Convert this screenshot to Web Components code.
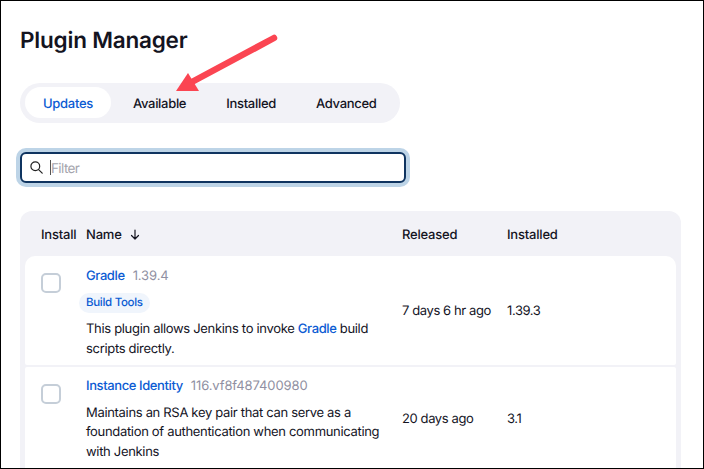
<!DOCTYPE html>
<html>
<head>
<meta charset="utf-8">
<style>
html, body { margin: 0; height: 100%; background: #fff; }
body { font-family: Inter, "Liberation Sans", sans-serif; color: #14141f; text-rendering: geometricPrecision; }
</style>
</head>
<body>
<plugin-page>
  <tab-bar>
    <tab-item active>Updates</tab-item>
    <tab-item>Available</tab-item>
    <tab-item>Installed</tab-item>
    <tab-item>Advanced</tab-item>
  </tab-bar>
  <filter-box></filter-box>
  <plugin-table>
    <plugin-row name="Gradle" version="1.39.4" released="7 days 6 hr ago" installed="1.39.3" tag="Build Tools">
      This plugin allows Jenkins to invoke <a href="#">Gradle</a> build scripts directly.
    </plugin-row>
    <plugin-row name="Instance Identity" version="116.vf8f487400980" released="20 days ago" installed="3.1">
      Maintains an RSA key pair that can serve as a foundation of authentication when communicating with Jenkins
    </plugin-row>
  </plugin-table>
</plugin-page>
<script>
class PluginPage extends HTMLElement {
  constructor() {
    super()
    this.attachShadow({mode: "open"}).innerHTML = /*html*/`
    <style>
      :host { display: block; box-sizing: border-box; position: relative; width: 704px; height: 469px; overflow: hidden;
        border: 1px solid #000; padding: 0 22px 0 19px; }
      h1 { margin: 0; padding-top: 25.5px; height: 82px; box-sizing: border-box; font-size: 22.5px; line-height: 28px; font-weight: 600; letter-spacing: -.2px; color: #14141f; }
      .arrow { position: absolute; left: 169px; top: 29px; }
    </style>
    <h1>Plugin Manager</h1>
    <slot></slot>
    <svg class="arrow" width="112" height="66" viewBox="170 30 112 66">
      <path d="M274 38 L190 83" stroke="#fb4552" stroke-width="6.5" stroke-linecap="round" fill="none"/>
      <path d="M176 91 L188 73 L199 91 Z" fill="#fb4552"/>
    </svg>`
  }
}

class TabBar extends HTMLElement {
  constructor() {
    super()
    this.attachShadow({mode: "open"}).innerHTML = /*css*/`
    <style>
      :host { display: flex; gap: 4px; box-sizing: border-box; width: 380px; height: 40px; padding: 4px 5px 5px; border-radius: 20px; background: #f2f2f7; }
    </style>
    <slot></slot>`
  }
}

class TabItem extends HTMLElement {
  constructor() {
    super()
    this.attachShadow({mode: "open"}).innerHTML = /*css*/`
    <style>
      :host { display: flex; align-items: center; justify-content: center; box-sizing: border-box; height: 31px; padding: 2px 18px 0; border-radius: 16px; font-size: 13px; font-weight: 500; letter-spacing: -.3px; color: #14141f; }
      :host([active]) { background: #fff; color: #0b5bd3; }
    </style>
    <slot></slot>`
  }
}

class FilterBox extends HTMLElement {
  constructor() {
    super()
    this.attachShadow({mode: "open"}).innerHTML = /*html*/`
    <style>
      :host { display: flex; align-items: center; box-sizing: border-box; width: 386px; height: 31px; margin-top: 29px;
        padding-left: 8px; background: #fff; border: 2px solid #0f3460; border-radius: 6px; box-shadow: 0 0 0 4px #bdd4e7; }
      svg { flex: none; }
      .caret { width: 1.5px; height: 15px; background: #555; margin: 0 0 0 6.5px; }
      span { padding-top: 2px; font-size: 13.5px; letter-spacing: -.6px; color: #a5a5ad; }
    </style>
    <svg width="13" height="13" viewBox="0 0 13 13" fill="none" stroke="#222" stroke-width="1.2" stroke-linecap="round">
      <circle cx="5.3" cy="5.3" r="4.4"/><path d="M8.6 8.6 L12.2 12.2"/>
    </svg>
    <i class="caret"></i><span>Filter</span>`
  }
}

class PluginTable extends HTMLElement {
  constructor() {
    super()
    this.attachShadow({mode: "open"}).innerHTML = /*html*/`
    <style>
      :host { display: block; box-sizing: border-box; width: 661px; min-height: 280px; margin-top: 28px; padding: 0 5px; background: #f2f2f7; border-radius: 12px 12px 0 0; }
      .head { display: grid; grid-template-columns: 61px 316px 105px 1fr; box-sizing: border-box; height: 45px; padding-top: 2px; align-items: center; font-size: 13px; font-weight: 500; letter-spacing: -.2px; }
      .head > :first-child { padding-left: 16px; }
      .head svg { vertical-align: -1px; margin-left: 5px; }
    </style>
    <div class="head">
      <div>Install</div>
      <div>Name <svg width="10" height="11" viewBox="0 0 10 11" fill="none" stroke="#14141f" stroke-width="1.2" stroke-linecap="round" stroke-linejoin="round"><path d="M5 1 V10 M1.5 6.5 L5 10 L8.5 6.5"/></svg></div>
      <div>Released</div>
      <div>Installed</div>
    </div>
    <slot></slot>`
  }
}

class PluginRow extends HTMLElement {
  constructor() {
    super()
    const tag = this.getAttribute("tag")
    this.attachShadow({mode: "open"}).innerHTML = /*html*/`
    <style>
      :host { display: grid; grid-template-columns: 61px 316px 105px 1fr; box-sizing: border-box; background: #fff; margin-bottom: 2px; font-size: 13px; line-height: 19.5px; letter-spacing: -.32px; border-radius: 2px; }
      :host(:first-of-type) { border-radius: 10px 10px 2px 2px; }
      .check { box-sizing: border-box; width: 20px; height: 20px; margin: 16.5px 0 0 16px; border: 2px solid #c5ced8; border-radius: 5px; }
      .main { padding: 10.5px 0 6px; }
      :host(:last-of-type) .main { padding: 9.5px 0 8px; }
      .top { display: flex; gap: 8px; height: 19.5px; }
      .name { color: #0b5bd3; font-weight: 500; letter-spacing: -.4px; }
      .ver { color: #9090a2; letter-spacing: -.1px; }
      .tag { width: fit-content; height: 20px; margin: 6.5px 0 7.5px -7px; padding: 0 7px; border-radius: 10px; background: #f0f5fc; color: #0b5bd3; font-size: 11.5px; line-height: 19px; font-weight: 500; letter-spacing: -.3px; }
      .desc { margin-top: 7.5px; width: 300px; }
      .tag + .desc { margin-top: 0; }
      .cell { align-self: center; padding-top: 2px; letter-spacing: -.4px; }
      ::slotted(a) { color: #0b5bd3; text-decoration: none; font-weight: 500; letter-spacing: -.4px; }
    </style>
    <div class="check"></div>
    <div class="main">
      <div class="top"><span class="name">${this.getAttribute("name")}</span><span class="ver">${this.getAttribute("version")}</span></div>
      ${tag ? `<div class="tag">${tag}</div>` : ""}
      <div class="desc"><slot></slot></div>
    </div>
    <div class="cell">${this.getAttribute("released")}</div>
    <div class="cell">${this.getAttribute("installed")}</div>`
  }
}

customElements.define("plugin-page", PluginPage)
customElements.define("tab-bar", TabBar)
customElements.define("tab-item", TabItem)
customElements.define("filter-box", FilterBox)
customElements.define("plugin-table", PluginTable)
customElements.define("plugin-row", PluginRow)
</script>
</body>
</html>
